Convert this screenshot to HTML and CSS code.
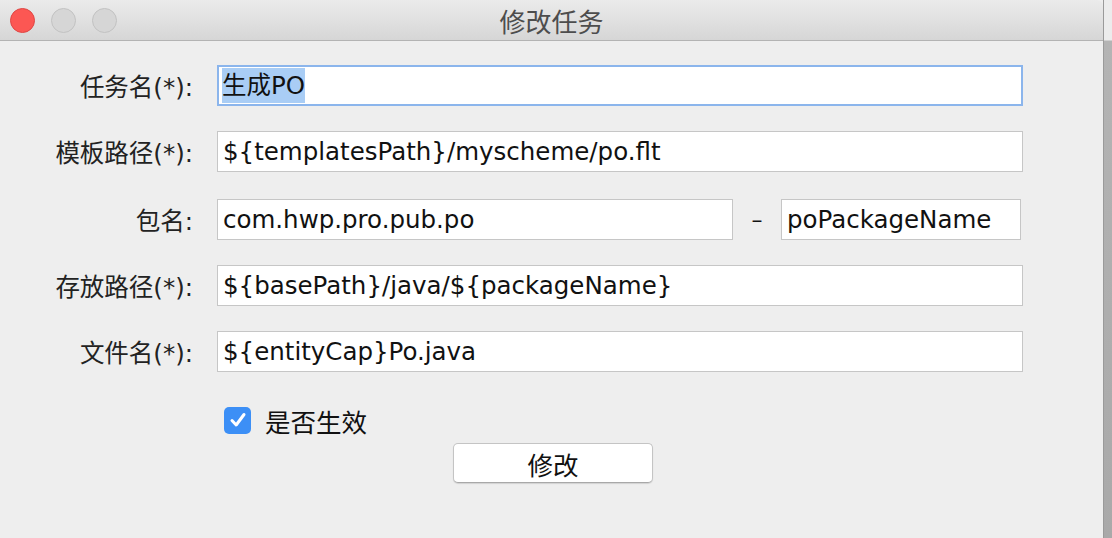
FILE: index.html
```html
<!DOCTYPE html>
<html lang="zh-CN">
<head>
    <meta charset="UTF-8">
    <title>修改任务</title>
    <link rel="stylesheet" href="styles.css">
</head>
<body>
    <div class="screen">
        <div class="window">
            <div class="titlebar">
                <div class="lights">
                    <span class="light close"></span>
                    <span class="light"></span>
                    <span class="light"></span>
                </div>
                <div class="title">修改任务</div>
            </div>

            <div class="form">
                <div class="row">
                    <label class="label">任务名(*):</label>
                    <div class="field focused"><span class="selected">生成PO</span></div>
                </div>
                <div class="row wide-gap">
                    <label class="label">模板路径(*):</label>
                    <div class="field">${templatesPath}/myscheme/po.flt</div>
                </div>
                <div class="row">
                    <label class="label">包名:</label>
                    <div class="field pkg">com.hwp.pro.pub.po</div>
                    <span class="dash">–</span>
                    <div class="field pkg-var">poPackageName</div>
                </div>
                <div class="row">
                    <label class="label">存放路径(*):</label>
                    <div class="field">${basePath}/java/${packageName}</div>
                </div>
                <div class="row">
                    <label class="label">文件名(*):</label>
                    <div class="field">${entityCap}Po.java</div>
                </div>

                <div class="check-row">
                    <span class="checkbox">
                        <svg width="20" height="20" viewBox="0 0 20 20"><path d="M4 10.5 L8.2 15 L16 4.5" fill="none" stroke="#fff" stroke-width="3" stroke-linecap="round" stroke-linejoin="round"/></svg>
                    </span>
                    <span class="check-label">是否生效</span>
                </div>

                <div class="actions">
                    <button class="btn">修改</button>
                </div>
            </div>
        </div>
        <div class="edge"></div>
    </div>
</body>
</html>
```

FILE: styles.css
```css
body {
    margin: 0;
    font-family: "DejaVu Sans", "Noto Sans CJK SC", sans-serif;
    color: #111;
    background: #eeeeee;
}

.screen {
    display: flex;
    width: 1112px;
    height: 538px;
    overflow: hidden;
}

.window {
    width: 1104px;
    height: 538px;
    background: #eeeeee;
}

.edge {
    width: 8px;
    background: linear-gradient(to bottom, #ececec 0, #ececec 40px, #b4b4b4 41px, #a9a9a9 100%);
    border-left: 1px solid #9a9a9a;
}

.titlebar {
    height: 40px;
    display: flex;
    align-items: center;
    position: relative;
    background: linear-gradient(to bottom, #ebebeb, #d6d6d6);
    border-bottom: 1px solid #b3b3b3;
    border-top-right-radius: 6px;
}

.lights {
    display: flex;
    gap: 16px;
    padding-left: 10px;
}

.light {
    width: 23px;
    height: 23px;
    border-radius: 50%;
    background: #d6d6d6;
    border: 1px solid #c2c2c2;
}

.light.close {
    background: #fc5753;
    border-color: #df4744;
}

.title {
    position: absolute;
    left: 0;
    right: 0;
    text-align: center;
    font-family: "Noto Sans CJK SC", sans-serif;
    font-size: 26px;
    color: #4d4d4d;
    pointer-events: none;
}

.form {
    padding-top: 24px;
}

.row {
    display: flex;
    align-items: center;
    height: 41px;
    margin-bottom: 25px;
}

.row.wide-gap {
    margin-bottom: 27px;
}

.label {
    width: 193px;
    margin-right: 24px;
    text-align: right;
    font-family: "DejaVu Sans", "Noto Sans CJK SC", sans-serif;
    font-size: 24.5px;
    color: #222;
}

.field {
    width: 806px;
    height: 41px;
    box-sizing: border-box;
    background: #fff;
    border: 1px solid #c6c6c6;
    padding: 0 5px;
    font-size: 24.5px;
    line-height: 39px;
    white-space: nowrap;
}

.field.focused {
    border: 2px solid #8bb5ec;
    padding: 0 3px;
    line-height: 37px;
}

.selected {
    background: #a9cdf5;
    padding: 3px 0;
}

.field.pkg {
    width: 516px;
}

.dash {
    width: 48px;
    text-align: center;
    font-size: 22px;
}

.field.pkg-var {
    width: 240px;
}

.check-row {
    display: flex;
    align-items: center;
    margin-top: 34px;
    padding-left: 224px;
    height: 28px;
}

.checkbox {
    width: 27px;
    height: 27px;
    border-radius: 5px;
    background: #3c8ff6;
    display: flex;
    align-items: center;
    justify-content: center;
}

.check-label {
    margin-left: 14px;
    font-family: "Noto Sans CJK SC", sans-serif;
    font-size: 25.5px;
}

.actions {
    padding-left: 453px;
    margin-top: 9px;
}

.btn {
    width: 200px;
    height: 40px;
    background: #fff;
    border: 1px solid #c4c4c4;
    border-bottom-color: #a8a8a8;
    border-radius: 5px;
    box-shadow: 0 1px 1px rgba(0, 0, 0, 0.12);
    font-family: "Noto Sans CJK SC", sans-serif;
    font-size: 25.5px;
    color: #111;
    padding: 0;
}
```
